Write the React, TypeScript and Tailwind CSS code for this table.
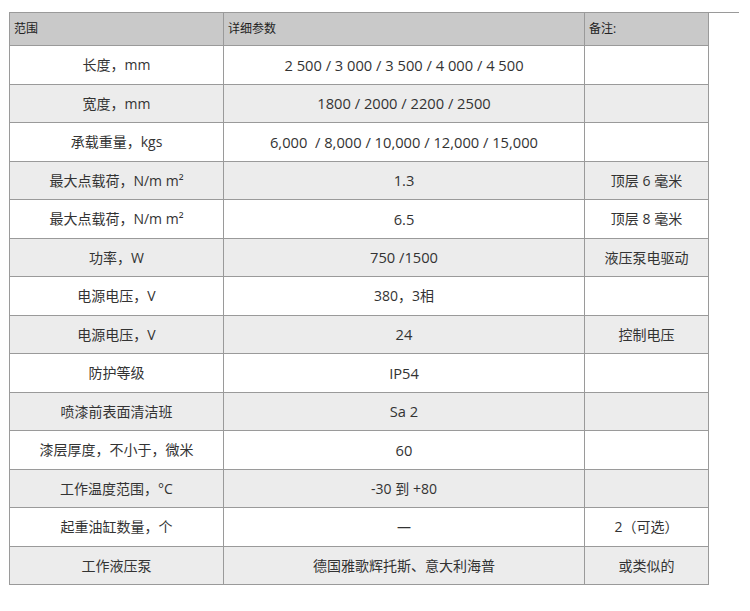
import React from 'react';

const rows: [string, string, string][] = [
  ['长度，mm', '2 500 / 3 000 / 3 500 / 4 000 / 4 500', ''],
  ['宽度，mm', '1800 / 2000 / 2200 / 2500', ''],
  ['承载重量，kgs', '6,000  / 8,000 / 10,000 / 12,000 / 15,000', ''],
  ['最大点载荷，N/m m²', '1.3', '顶层 6 毫米'],
  ['最大点载荷，N/m m²', '6.5', '顶层 8 毫米'],
  ['功率，W', '750 /1500', '液压泵电驱动'],
  ['电源电压，V', '380，3相', ''],
  ['电源电压，V', '24', '控制电压'],
  ['防护等级', 'IP54', ''],
  ['喷漆前表面清洁班', 'Sa 2', ''],
  ['漆层厚度，不小于，微米', '60', ''],
  ['工作温度范围，°C', '-30 到 +80', ''],
  ['起重油缸数量，个', '—', '2（可选）'],
  ['工作液压泵', '德国雅歌辉托斯、意大利海普', '或类似的'],
];

export default function App() {
  return (
    <div
      className="w-[750px] h-[611px] bg-white text-[#333] pt-[12px] pl-[9px]"
      style={{ fontFamily: '"Open Sans", "Noto Sans CJK SC", sans-serif' }}
    >
      <div className="w-[730px] border-t border-[#9a9a9a]" />
      <div className="w-[700px] grid grid-cols-[214px_361px_124px] border-l border-[#9a9a9a]">
        {/* header */}
        <div className="h-[33px] bg-[#c9c9c9] border-r border-b border-[#9a9a9a] flex items-center pl-[4px] text-[12px] text-[#222]">范围</div>
        <div className="h-[33px] bg-[#c9c9c9] border-r border-b border-[#9a9a9a] flex items-center pl-[4px] text-[12px] text-[#222]">详细参数</div>
        <div className="h-[33px] bg-[#c9c9c9] border-r border-b border-[#9a9a9a] flex items-center pl-[4px] text-[12px] text-[#222]">备注:</div>
        {rows.map(([a, b, c], i) => {
          const bg = i % 2 === 1 ? 'bg-[#ececec]' : 'bg-white';
          const latin = /^[\x00-\x7f\s]+$/.test(b);
          return (
            <React.Fragment key={i}>
              <div className={`${bg} h-[38.5px] border-r border-b border-[#9a9a9a] flex items-center justify-center text-[14px]`}>{a}</div>
              <div className={`${bg} h-[38.5px] border-r border-b border-[#9a9a9a] flex items-center justify-center whitespace-pre ${latin ? 'text-[14.7px]' : 'text-[14px]'}`}>{b}</div>
              <div className={`${bg} h-[38.5px] border-r border-b border-[#9a9a9a] flex items-center justify-center text-[14px]`}>{c}</div>
            </React.Fragment>
          );
        })}
      </div>
    </div>
  );
}
